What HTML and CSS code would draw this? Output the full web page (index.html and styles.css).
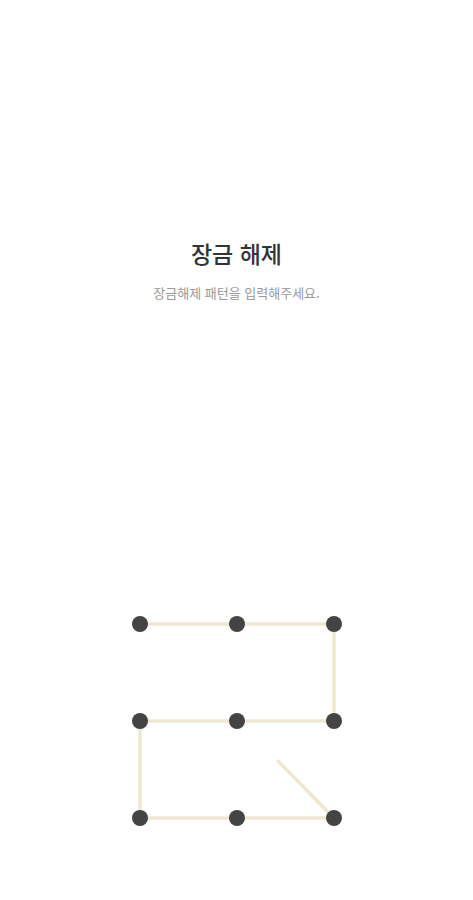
FILE: index.html
```html
<!DOCTYPE html>
<html lang="ko">
<head>
<meta charset="utf-8">
<title>장금 해제</title>
<link rel="stylesheet" href="styles.css">
</head>
<body>
<main class="screen">
  <h1 class="title">장금 해제</h1>
  <p class="subtitle">장금해제 패턴을 입력해주세요.</p>
  <div class="pattern">
    <svg width="214" height="214" viewBox="0 0 214 214">
      <g stroke="#efe7d0" stroke-width="3.5" stroke-linecap="round" fill="none">
        <polyline points="10,10 107,10 204,10 204,107 107,107 10,107 10,204 107,204 204,204 148,147"/>
      </g>
      <g fill="#444444">
        <circle cx="10" cy="10" r="8"/>
        <circle cx="107" cy="10" r="8"/>
        <circle cx="204" cy="10" r="8"/>
        <circle cx="10" cy="107" r="8"/>
        <circle cx="107" cy="107" r="8"/>
        <circle cx="204" cy="107" r="8"/>
        <circle cx="10" cy="204" r="8"/>
        <circle cx="107" cy="204" r="8"/>
        <circle cx="204" cy="204" r="8"/>
      </g>
    </svg>
  </div>
</main>
</body>
</html>
```
FILE: styles.css
```css
html, body {
  margin: 0;
  padding: 0;
  background: #ffffff;
}
.screen {
  display: flex;
  flex-direction: column;
  align-items: center;
  font-family: "Noto Sans CJK KR", "Noto Sans", sans-serif;
  padding-top: 238px;
}
.title {
  margin: 0;
  font-size: 23px;
  line-height: 30px;
  font-weight: 500;
  color: #333333;
}
.subtitle {
  margin: 16px 0 0;
  font-size: 13px;
  line-height: 18px;
  color: #999999;
}
.pattern {
  margin-top: 312px;
  margin-left: 1px;
  display: flex;
}
.pattern svg {
  display: block;
}
```
